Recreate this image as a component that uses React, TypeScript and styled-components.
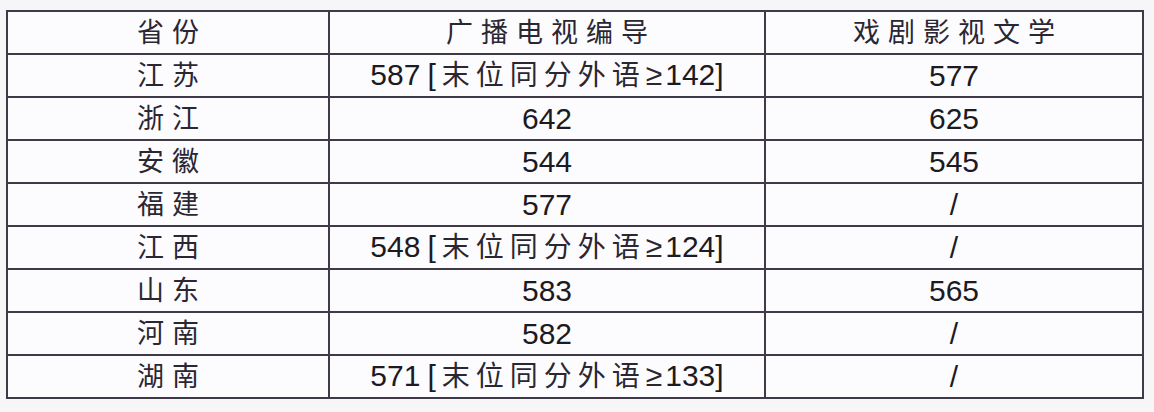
import React from "react";
import styled, { createGlobalStyle } from "styled-components";

interface ScoreRow {
    province: string;
    broadcast: string;
    limit?: string;
    drama: string;
}

const rows: Array<ScoreRow> = [
    { province: "江苏", broadcast: "587", limit: "142", drama: "577" },
    { province: "浙江", broadcast: "642", drama: "625" },
    { province: "安徽", broadcast: "544", drama: "545" },
    { province: "福建", broadcast: "577", drama: "/" },
    { province: "江西", broadcast: "548", limit: "124", drama: "/" },
    { province: "山东", broadcast: "583", drama: "565" },
    { province: "河南", broadcast: "582", drama: "/" },
    { province: "湖南", broadcast: "571", limit: "133", drama: "/" },
];

export default function App() {
    return (
        <>
            <GlobalStyle />
            <Page>
                <ScoreTable>
                    <colgroup>
                        <col style={{ width: 322 }} />
                        <col style={{ width: 436 }} />
                        <col style={{ width: 378 }} />
                    </colgroup>
                    <thead>
                        <tr>
                            <Cell $spaced>省份</Cell>
                            <Cell $spaced>广播电视编导</Cell>
                            <Cell $spaced>戏剧影视文学</Cell>
                        </tr>
                    </thead>
                    <tbody>
                        {rows.map(row => <Row key={row.province} {...row} />)}
                    </tbody>
                </ScoreTable>
            </Page>
        </>
    );
}

const Row = (props: ScoreRow) => {
    return (
        <tr>
            <Cell as="td" $spaced>{props.province}</Cell>
            <Cell as="td">
                {props.broadcast}
                {props.limit && (
                    <Note>[<Cjk>末位同分外语</Cjk><Ge>≥</Ge>{props.limit}]</Note>
                )}
            </Cell>
            <Cell as="td">{props.drama}</Cell>
        </tr>
    );
}

const GlobalStyle = createGlobalStyle`
    html, body {
        margin: 0;
        background: #f6f6f8;
    }
`

const Page = styled.div`
    width: 1154px;
    height: 412px;
    padding: 10px 0 0 6px;
    box-sizing: border-box;
`

const ScoreTable = styled.table`
    width: 1138px;
    border-collapse: collapse;
    table-layout: fixed;
    background: #fcfcfe;
    font-family: "Liberation Sans", "Noto Sans CJK SC", sans-serif;
    color: #1c1a22;
`

const Cell = styled.th<{ $spaced?: boolean }>`
    height: 41px;
    padding: 0;
    border: 2px solid #3f3948;
    text-align: center;
    vertical-align: middle;
    font-weight: normal;
    font-size: ${p => p.$spaced ? "27px" : "30px"};
    letter-spacing: ${p => p.$spaced ? "8px" : "0"};
    text-indent: ${p => p.$spaced ? "8px" : "0"};
    color: ${p => p.$spaced ? "#2a2632" : "#1c1a22"};
    line-height: 34px;
    white-space: nowrap;
`

const Note = styled.span`
    margin-left: 7px;
`

const Cjk = styled.span`
    font-size: 28px;
    letter-spacing: 6px;
    margin-left: 6px;
    color: #2a2632;
`

const Ge = styled.span`
    font-size: 30px;
    margin: 0 3px 0 0;
    color: #2a2632;
`
